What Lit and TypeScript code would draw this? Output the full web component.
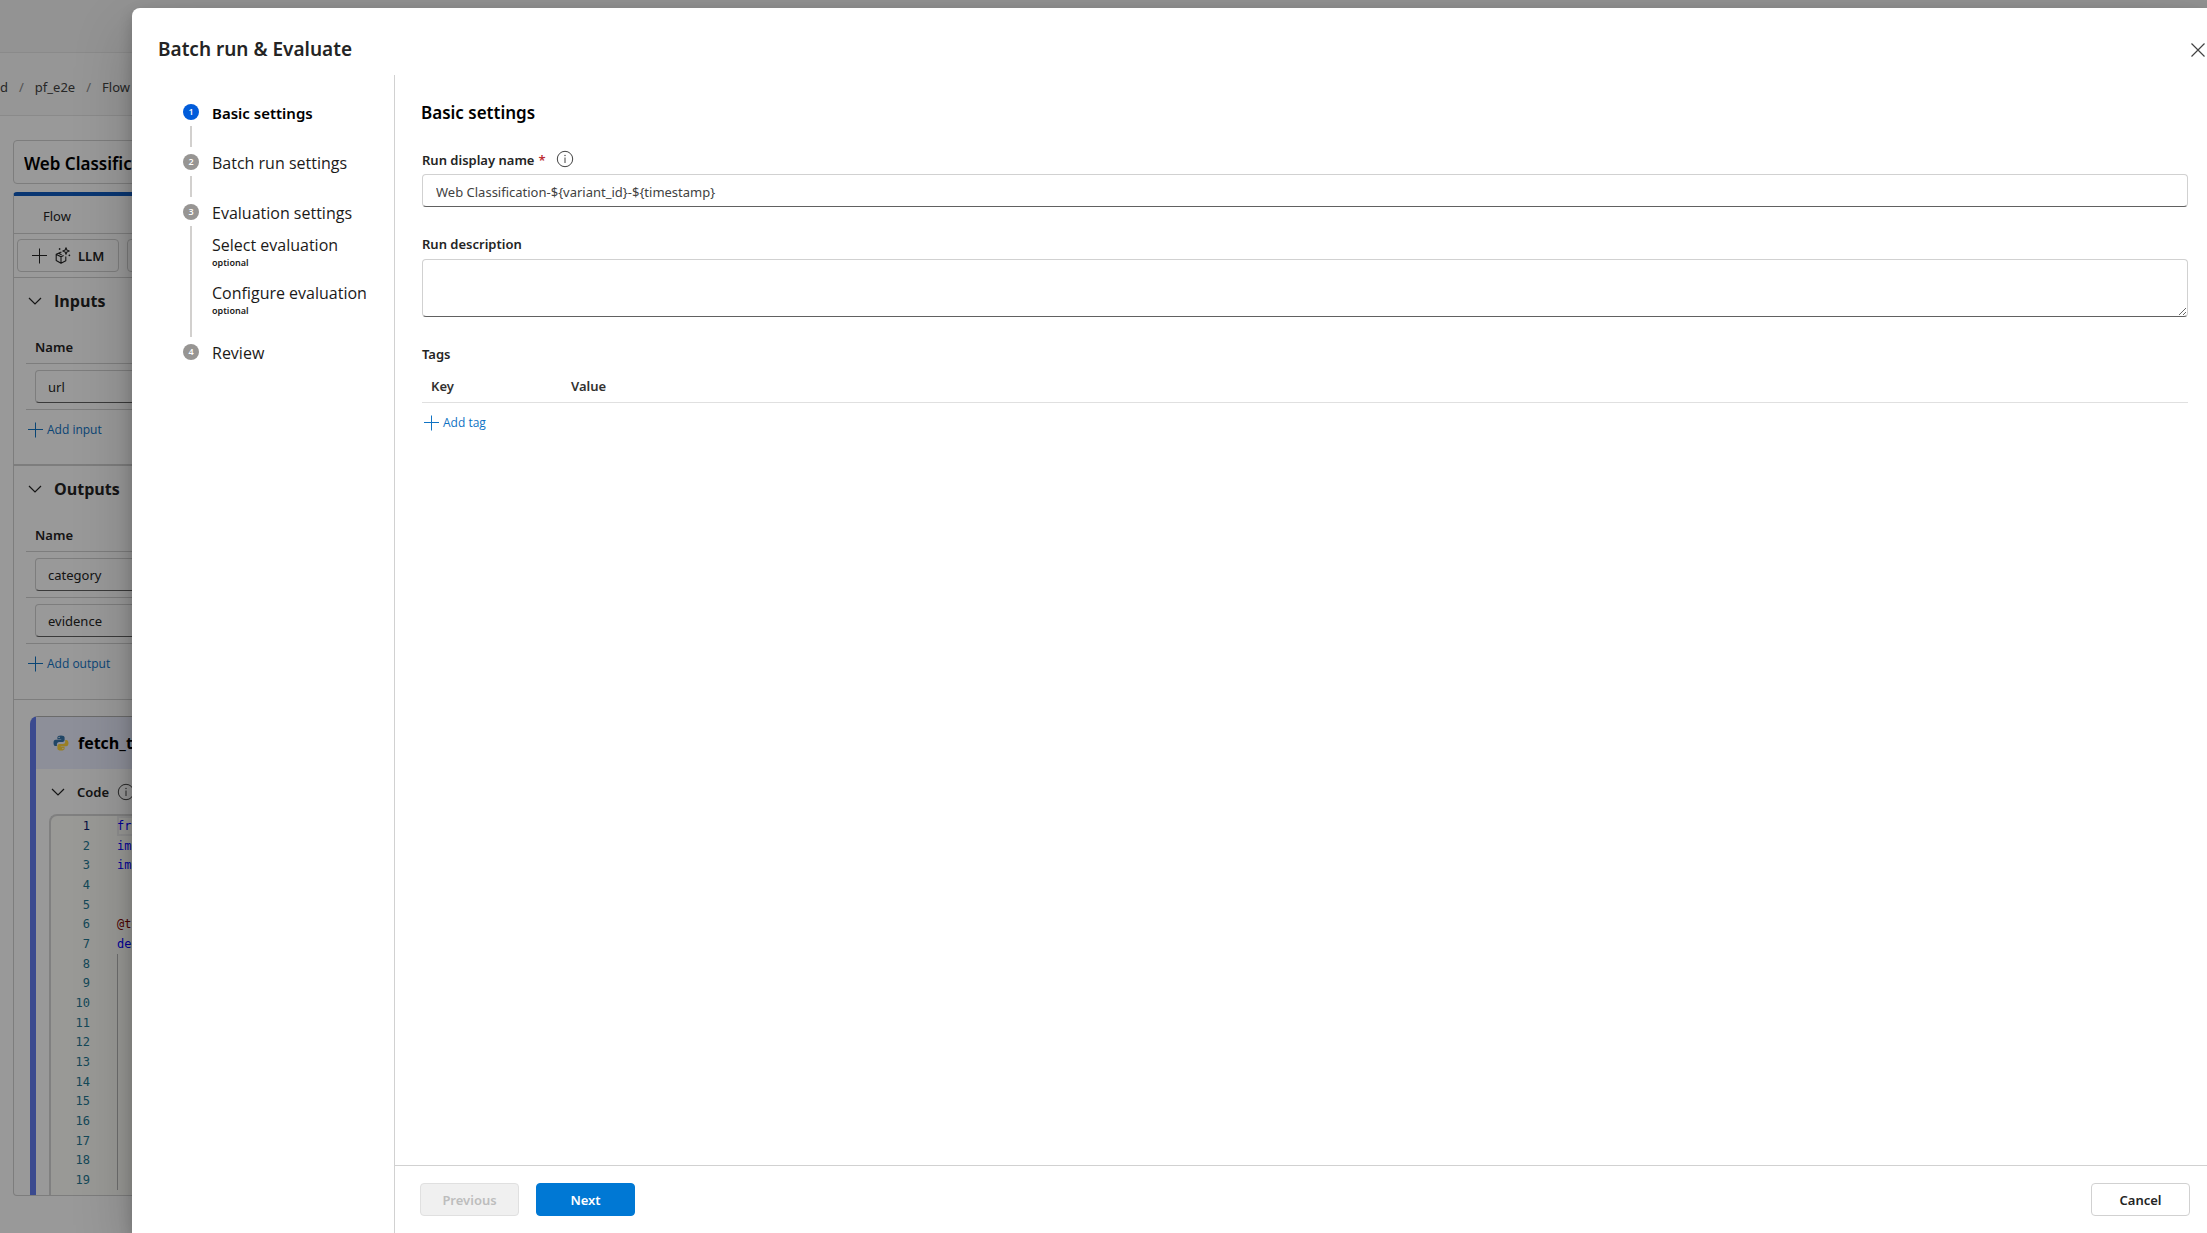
import { LitElement, html, css, nothing } from "lit";
import { customElement, property, state } from "lit/decorators.js";

const base = css`
  *, *::before, *::after { box-sizing: border-box; }
  :host { font-family: "Noto Sans", "Open Sans", sans-serif; font-size: 13px; line-height: 20px; color: #242424; }
  button, input, textarea { font: inherit; color: inherit; }
  button { cursor: pointer; }
  h1, h2, h3, p, ol, ul { margin: 0; padding: 0; }
  ol, ul { list-style: none; }
  svg { display: block; flex: none; }
  .field {
    display: block; width: 100%; background: #fff; border: 1px solid #d1d1d1;
    border-bottom-color: #616161; border-radius: 4px; outline: none;
  }
  .add {
    display: flex; align-items: center; gap: 3px; padding: 0; border: 0; background: none;
    color: #0f73c4; font-family: "Open Sans", sans-serif; font-size: 12px; line-height: 16px;
  }
`;

const plus = html`<svg width="16" height="16" viewBox="0 0 16 16" fill="none" stroke="currentColor" aria-hidden="true">
  <path d="M7.500.5v15M0 7.500h15" /></svg>`;
const chevron = html`<svg width="14" height="8" viewBox="0 0 14 8" fill="none" stroke="currentColor" stroke-width="1.2" aria-hidden="true">
  <path d="M1 1l6 6 6-6" /></svg>`;
const info = html`<svg width="18" height="18" viewBox="0 0 18 18" fill="none" stroke="#424242" aria-hidden="true">
  <circle cx="9" cy="9" r="7.7" /><path d="M9 7.5v5.500" /><circle cx="9" cy="5.500" r=".7" fill="#424242" stroke="none" /></svg>`;
const cube = html`<svg width="16" height="18" viewBox="0 0 16 18" fill="none" stroke="#242424" stroke-width="1.1" stroke-linejoin="round" aria-hidden="true">
  <path d="M6.500 5.200H5.700L1.200 7.200v6.300l4.800 2.800 4.800-2.500V9.500M1.400 7.400L6 9.800l2.600-1.300M6 9.800v6.300M3.600 6.200l3 1.600" />
  <path d="M11 .8l.9 2.300 2.300.9-2.300.9L11 7.200l-.9-2.300L7.800 4l2.300-.9z" />
  <path d="M4.600 1.200v1.600M3.800 2h1.600M14.400 7.600v1.600M13.600 8.400h1.600" stroke-width="1" /></svg>`;
const python = html`<svg width="16" height="16" viewBox="0 0 16 16" aria-hidden="true">
  <path fill="#3776ab" d="M7.900.5C5.600.5 4.400 1.200 4.400 2.600v1.600h3.800v.6H2.700C1.200 4.800.5 6 .5 7.900s.8 3.200 2.100 3.200h1.300V9.300c0-1.300 1-2.300 2.200-2.300h3.600c1.100 0 1.900-.8 1.900-1.900V2.600C11.600 1.200 10.300.5 7.900.5z" />
  <circle cx="6.100" cy="2.400" r=".7" fill="#fff" />
  <path fill="#ffd43b" d="M8.100 15.500c2.300 0 3.500-.7 3.500-2.100v-1.600H7.800v-.6h5.500c1.500 0 2.200-1.200 2.200-3.100s-.8-3.200-2.100-3.200h-1.200v1.800c0 1.300-1 2.300-2.200 2.300H6.300c-1.100 0-1.900.8-1.900 1.900v2.500c0 1.400 1.300 2.100 3.700 2.100z" />
  <circle cx="9.900" cy="13.600" r=".7" fill="#fff" /></svg>`;

interface CodeLine { text: string; kind: string; }
const code: CodeLine[] = [
  { text: "from", kind: "keyword" },
  { text: "import", kind: "keyword" },
  { text: "import", kind: "keyword" },
  { text: "", kind: "" },
  { text: "", kind: "" },
  { text: "@tool", kind: "decorator" },
  { text: "def", kind: "keyword" },
  ...Array.from({ length: 12 }, () => ({ text: "", kind: "guide" })),
];

@customElement("flow-fields")
class FlowFields extends LitElement {
  @property() heading = "";
  @property() action = "";
  @property({ attribute: false }) names: string[] = [];

  static styles = [base, css`
    :host { display: block; }
    .head { display: flex; align-items: center; gap: 12px; height: 46px; padding-left: 14px; }
    .head h2 { font-size: 16px; line-height: 24px; font-weight: 700; font-family: "Open Sans", sans-serif; }
    table { width: calc(100% - 12px); margin-left: 12px; border-collapse: collapse; }
    th { height: 39px; padding: 7px 9px 0; text-align: left; font-weight: 600; border-bottom: 1px solid #d1d1d1; }
    td { height: 46px; padding: 6px 9px 5px; border-bottom: 1px solid #d1d1d1; }
    .field { height: 33px; padding: 0 12px; }
    .add { margin: 12px 0 0 14px; }
  `];

  render() {
    return html`
      <div class="head">${chevron}<h2>${this.heading}</h2></div>
      <table>
        <thead><tr><th>Name</th></tr></thead>
        <tbody>
          ${this.names.map((n) => html`<tr><td><input class="field" aria-label="${this.heading} name" .value=${n} /></td></tr>`)}
        </tbody>
      </table>
      <button class="add" type="button">${plus}${this.action}</button>`;
  }
}

@customElement("flow-page")
class FlowPage extends LitElement {
  static styles = [base, css`
    :host { display: flex; flex-direction: column; min-height: 100vh; background: #fff; }
    .top { height: 53px; background: #f5f5f5; border-bottom: 1px solid #e6e6e6; }
    .crumbs { height: 63px; background: #fafafa; border-bottom: 1px solid #e6e6e6; display: flex; align-items: center; gap: 11px; padding-top: 6px; }
    .crumbs a { color: #424242; text-decoration: none; }
    .crumbs span { color: #8a8a8a; }
    main { flex: 1; display: flex; flex-direction: column; padding: 24px 13px 37px; }
    .name { height: 44px; padding: 2px 10px 0; font-size: 17px; font-weight: 600; border: 1px solid #d1d1d1; border-radius: 4px; color: #000; }
    .panel { flex: 1; display: flex; flex-direction: column; margin-top: 8px; border: 1px solid #d1d1d1; border-top: 4px solid #0f5bbf; border-radius: 4px; overflow: hidden; }
    .tabs { height: 38px; padding: 2px 29px 0; border-bottom: 1px solid #d1d1d1; display: flex; align-items: center; }
    .tools { height: 44px; padding: 0 3px; display: flex; align-items: center; gap: 8px; border-bottom: 1px solid #d1d1d1; }
    .tool { display: flex; align-items: center; gap: 7px; width: 102px; height: 33px; padding: 0 14px; font-weight: 600; background: #fff; border: 1px solid #d1d1d1; border-radius: 4px; }
    .inputs { height: 188px; border-bottom: 2px solid #d1d1d1; }
    .outputs { height: 234px; border-bottom: 1px solid #d1d1d1; }
    .node { flex: 1; display: flex; flex-direction: column; margin: 16px 16px 0; border-left: 6px solid #637cef; border-top: 1px solid #b3b3b3; border-radius: 8px 0 0 0; }
    .nodehead { display: flex; align-items: center; gap: 9px; height: 52px; padding-left: 17px; background: #ebefff; }
    .nodehead h3 { font-size: 16px; line-height: 24px; font-weight: 700; color: #000; font-family: "Open Sans", sans-serif; }
    .codehead { display: flex; align-items: center; gap: 12px; height: 45px; padding-left: 15px; font-weight: 600; }
    .codehead span { display: flex; align-items: center; gap: 8px; }
    .editor {
      flex: 1; display: grid; grid-auto-rows: 1fr; margin-left: 13px; padding-bottom: 5px; background: #fffffa;
      border: 2px solid #d6d6d6; border-width: 2px 0 0 2px; border-radius: 8px 0 0 0;
      font-family: "DejaVu Sans Mono", monospace; font-size: 12px; line-height: 18px;
    }
    .line { display: grid; grid-template-columns: 39px 1fr; column-gap: 27px; align-items: center; }
    .num { text-align: right; color: #237893; }
    .line:first-child .num { color: #0b216f; }
    .src { align-self: stretch; display: flex; align-items: center; }
    .line:first-child .src { box-shadow: inset 0 0 0 2px #eee; }
    .keyword { color: #0000ff; }
    .decorator { color: #800000; }
    .guide { border-left: 1px solid #b8b8b8; }
  `];

  render() {
    return html`
      <div class="top"></div>
      <nav class="crumbs" aria-label="Breadcrumb">
        <a href="#d">d</a><span>/</span><a href="#pf">pf_e2e</a><span>/</span><a href="#flows">Flow</a>
      </nav>
      <main>
        <input class="name" aria-label="Flow name" .value=${"Web Classification"} />
        <section class="panel">
          <div class="tabs">Flow</div>
          <div class="tools">
            <button class="tool" type="button">${plus}${cube}LLM</button>
            <button class="tool" type="button" aria-label="Prompt"></button>
          </div>
          <flow-fields class="inputs" heading="Inputs" action="Add input" .names=${["url"]}></flow-fields>
          <flow-fields class="outputs" heading="Outputs" action="Add output" .names=${["category", "evidence"]}></flow-fields>
          <article class="node">
            <div class="nodehead">${python}<h3>fetch_text</h3></div>
            <div class="codehead">${chevron}<span>Code ${info}</span></div>
            <div class="editor">
              ${code.map((l, i) => html`<div class="line"><span class="num">${i + 1}</span><span class="src ${l.kind}">${l.text}</span></div>`)}
            </div>
          </article>
        </section>
      </main>`;
  }
}

interface Step { label: string; children?: string[]; }
const steps: Step[] = [
  { label: "Basic settings" },
  { label: "Batch run settings" },
  { label: "Evaluation settings", children: ["Select evaluation", "Configure evaluation"] },
  { label: "Review" },
];

@customElement("step-list")
class StepList extends LitElement {
  @property({ type: Number }) current = 0;

  static styles = [base, css`
    :host { display: block; padding: 25px 12px 0 51px; color: #1b1a19; font-family: "Open Sans", sans-serif; font-size: 16px; line-height: 24px; }
    .step { display: flex; gap: 13px; min-height: 50px; }
    .rail { display: flex; flex-direction: column; align-items: center; width: 16px; padding: 4px 0 3px; }
    .dot { width: 16px; height: 16px; border-radius: 50%; background: #979593; color: #fff; font-size: 9px; line-height: 16px; font-weight: 600; text-align: center; }
    .bar { flex: 1; width: 2px; margin-top: 6px; background: #d2d0ce; }
    .text { padding: 1px 0 23px; white-space: nowrap; }
    .current .dot { background: #015cda; }
    .current .label { font-family: "Noto Sans", sans-serif; font-size: 15px; font-weight: 600; color: #000; }
    .subs { display: grid; gap: 12px; padding-top: 8px; }
    .optional { display: block; font-family: "Noto Sans", sans-serif; font-size: 9px; line-height: 12px; font-weight: 600; }
  `];

  render() {
    return html`<ol>
      ${steps.map((s, i) => html`
        <li class="step ${i === this.current ? "current" : ""}">
          <div class="rail"><span class="dot">${i + 1}</span>${i < steps.length - 1 ? html`<span class="bar"></span>` : nothing}</div>
          <div class="text">
            <div class="label">${s.label}</div>
            ${s.children ? html`<ul class="subs">${s.children.map((c) => html`<li>${c}<span class="optional">optional</span></li>`)}</ul>` : nothing}
          </div>
        </li>`)}
    </ol>`;
  }
}

@customElement("app-root")
class AppRoot extends LitElement {
  @state() private runName = "Web Classification-${variant_id}-${timestamp}";

  static styles = [base, css`
    :host { display: block; position: relative; min-height: 100vh; overflow: hidden; }
    .scrim { position: absolute; inset: 0; background: rgba(0, 0, 0, 0.4); }
    .dialog {
      position: absolute; inset: 8px 0 0 132px; display: flex; flex-direction: column; background: #fff;
      border-radius: 8px 0 0 0; box-shadow: 0 25px 58px rgba(0, 0, 0, 0.22), 0 5px 14px rgba(0, 0, 0, 0.18);
    }
    .head { display: flex; align-items: center; justify-content: space-between; height: 67px; padding: 14px 0 0 26px; }
    .head h1 { font-size: 19px; line-height: 28px; font-weight: 600; }
    .close { display: flex; padding: 2px; margin-top: 2px; border: 0; background: none; }
    .body { flex: 1; display: grid; grid-template-columns: 262px 1fr; }
    .pane { display: flex; flex-direction: column; border-left: 1px solid #d1d1d1; }
    .form { flex: 1; padding: 25px 19px 0 27px; }
    .form h2 { margin-left: -1px; font-size: 17px; line-height: 26px; font-weight: 600; color: #000; }
    .caption { display: flex; align-items: center; height: 20px; font-weight: 600; }
    .row { display: flex; align-items: flex-start; gap: 10px; margin: 24px 0 4px; }
    .req { margin-left: 4px; color: #bc2f32; }
    .name { height: 33px; padding: 2px 13px 0; color: #424242; }
    .desc { margin: 27px 0 5px; }
    .area { height: 58px; resize: vertical; padding: 6px 13px; }
    .tags { margin-top: 27px; }
    table { width: 100%; border-collapse: collapse; }
    th { height: 38px; padding: 6px 9px 0; text-align: left; font-weight: 600; border-bottom: 1px solid #e0e0e0; color: #323130; }
    .key { width: 140px; }
    .add { margin: 12px 0 0 2px; }
    .foot { display: flex; gap: 17px; padding: 17px 17px 17px 25px; border-top: 1px solid #d1d1d1; }
    .btn { width: 99px; height: 33px; padding: 0; font-weight: 600; background: #fff; border: 1px solid #d1d1d1; border-radius: 4px; }
    .btn:disabled { color: #bdbdbd; background: #f0f0f0; border-color: #e0e0e0; }
    .primary { color: #fff; background: #0078d4; border-color: #0078d4; }
    .cancel { margin-left: auto; }
  `];

  render() {
    return html`
      <flow-page></flow-page>
      <div class="scrim"></div>
      <section class="dialog" role="dialog" aria-labelledby="title">
        <header class="head">
          <h1 id="title">Batch run &amp; Evaluate</h1>
          <button class="close" type="button" aria-label="Close">
            <svg width="14" height="14" viewBox="0 0 14 14" fill="none" stroke="#424242" stroke-width="1.2"><path d="M.5.5l13 13M13.500.5l-13 13" /></svg>
          </button>
        </header>
        <div class="body">
          <step-list .current=${0}></step-list>
          <div class="pane">
            <div class="form">
              <h2>Basic settings</h2>
              <div class="row">
                <label class="caption" for="run-name">Run display name<span class="req">*</span></label>
                ${info}
              </div>
              <input id="run-name" class="field name" .value=${this.runName}
                @input=${(e: Event) => { this.runName = (e.target as HTMLInputElement).value; }} />
              <label class="caption desc" for="run-desc">Run description</label>
              <textarea id="run-desc" class="field area"></textarea>
              <div class="caption tags">Tags</div>
              <table aria-label="Tags">
                <thead><tr><th class="key">Key</th><th>Value</th></tr></thead>
              </table>
              <button class="add" type="button">${plus}Add tag</button>
            </div>
            <footer class="foot">
              <button class="btn" type="button" disabled>Previous</button>
              <button class="btn primary" type="button">Next</button>
              <button class="btn cancel" type="button">Cancel</button>
            </footer>
          </div>
        </div>
      </section>`;
  }
}
